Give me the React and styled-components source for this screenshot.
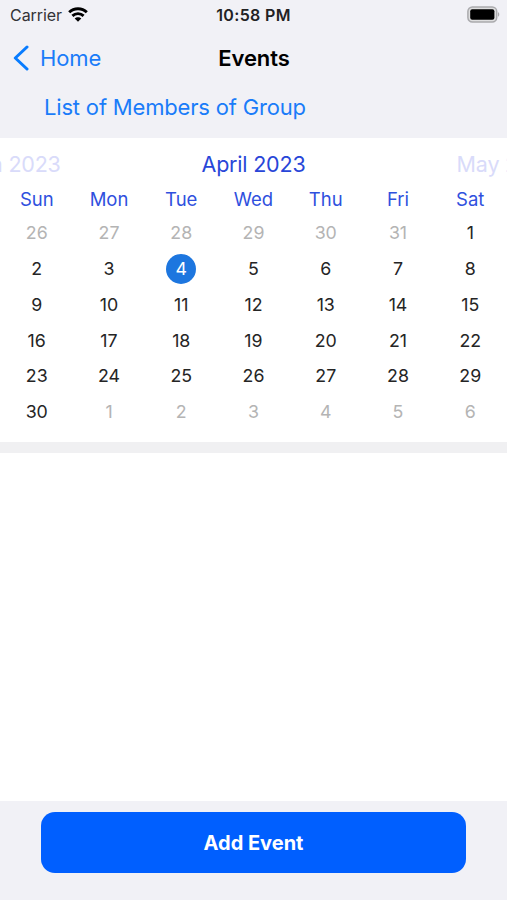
import React from "react";
import styled, { createGlobalStyle } from "styled-components";

const GlobalStyle = createGlobalStyle`
  * { box-sizing: border-box; }
  body { margin: 0; background: #f1f1f6; }
  button { font: inherit; border: 0; padding: 0; background: none; cursor: pointer; }
`;

const Screen = styled.main`
  width: 507px;
  height: 900px;
  display: flex;
  flex-direction: column;
  overflow: hidden;
  background: #f1f1f6;
  color: #000;
  font-family: Inter, "Liberation Sans", sans-serif;
`;

const StatusBar = styled.header`
  height: 29px;
  flex: none;
  display: grid;
  grid-template-columns: 1fr auto 1fr;
  align-items: center;
  padding: 0 7px 0 10px;
`;

const Carrier = styled.div`
  display: flex;
  align-items: center;
  gap: 6px;
  font-size: 16px;
  letter-spacing: -0.05px;
  color: #333336;
`;

const Clock = styled.time`
  font-size: 16px;
  font-weight: 600;
  letter-spacing: 0.35px;
  margin: 0 3px 0 0;
  color: #222224;
`;

const Battery = styled.svg`
  justify-self: end;
`;

const NavBar = styled.nav`
  height: 57px;
  flex: none;
  display: grid;
  grid-template-columns: 1fr auto 1fr;
  align-items: center;
  padding: 0 13px;
`;

const BackButton = styled.button`
  display: flex;
  align-items: center;
  justify-self: start;
  gap: 10px;
  font-size: 22px;
  line-height: 28px;
  letter-spacing: -0.1px;
  color: #1a7cf9;
`;

const Title = styled.h1`
  margin: 0 0 0 1px;
  font-size: 22px;
  line-height: 28px;
  font-weight: 600;
  letter-spacing: -0.1px;
`;

const LinkRow = styled.div`
  height: 52px;
  flex: none;
  padding: 7px 0 0 44px;
`;

const MembersLink = styled.button`
  display: block;
  font-size: 22px;
  line-height: 28px;
  letter-spacing: -0.18px;
  color: #1a7cf9;
`;

const Calendar = styled.section`
  height: 304px;
  flex: none;
  background: #fff;
  padding-top: 11px;
`;

const Months = styled.div`
  height: 30px;
  display: flex;
  justify-content: center;
`;

const Month = styled.div`
  width: 253.5px;
  flex: none;
  text-align: center;
  white-space: nowrap;
  font-size: 21.5px;
  line-height: 30px;
  letter-spacing: -0.2px;
  color: ${(p) => (p.$faded ? "#d9dbfa" : "#2846d8")};
`;

const Week = styled.div`
  display: grid;
  grid-template-columns: repeat(7, 72.25px);
  justify-content: center;
  height: ${(p) => (p.$heading ? "36.4px" : "35.75px")};
  align-items: center;
`;

const DayName = styled.span`
  text-align: center;
  font-size: 18.5px;
  line-height: 24px;
  padding-top: 3.6px;
  color: #2f50de;
`;

const Day = styled.button`
  justify-self: center;
  width: 30px;
  height: 30px;
  border-radius: 50%;
  font-size: 17.8px;
  line-height: 30px;
  text-align: center;
  color: ${(p) => (p.$selected ? "#fff" : p.$outside ? "#b4b4b4" : "#252525")};
  background: ${(p) => (p.$selected ? "#1d76df" : "transparent")};
`;

const Agenda = styled.section`
  flex: none;
  height: 359px;
  border-top: 11px solid #f0f0f2;
  background: #fff;
`;

const Footer = styled.footer`
  flex: 1;
  padding: 11px 41px 0;
`;

const AddButton = styled.button`
  display: block;
  width: 100%;
  height: 61px;
  border-radius: 14px;
  background: #005fff;
  color: #fff;
  font-size: 20px;
  font-weight: 700;
`;

const DAY_NAMES = ["Sun", "Mon", "Tue", "Wed", "Thu", "Fri", "Sat"];

const FIRST_CELL = Date.UTC(2023, 2, 26);
const WEEKS = Array.from({ length: 6 }, (_, w) =>
  Array.from({ length: 7 }, (_, d) => {
    const date = new Date(FIRST_CELL + (w * 7 + d) * 86400000);
    return { day: date.getUTCDate(), outside: date.getUTCMonth() !== 3 };
  })
);

function WifiIcon() {
  return (
    <svg width="20" height="15" viewBox="0 0 20 15" fill="none" stroke="#000" strokeWidth="2.9">
      <path d="M1.2 5.3C6 .6 14 .6 18.8 5.3" />
      <path d="M4.4 8.9c3.2-3 8-3 11.2 0" />
      <path d="M10 14.7 6.7 11.4c1.7-1.6 4.9-1.6 6.6 0Z" fill="#000" stroke="none" />
    </svg>
  );
}

function BatteryIcon() {
  return (
    <Battery width="33" height="17" viewBox="0 0 33 17">
      <rect x="0.9" y="1" width="28.8" height="15" rx="4.5" fill="#dededf" stroke="#aaaaad" strokeWidth="1.5" />
      <rect x="3.2" y="3.3" width="24.2" height="10.4" rx="2" fill="#000" />
      <path d="M31 6.3c1.7.6 1.7 3.8 0 4.4Z" fill="#aaaaad" />
    </Battery>
  );
}

function ChevronIcon() {
  return (
    <svg width="17" height="26" viewBox="0 0 17 26" fill="none" stroke="#087cff" strokeWidth="3" strokeLinecap="round" strokeLinejoin="round">
      <path d="M14 2 2.3 13 14 24" />
    </svg>
  );
}

export default function App() {
  return (
    <>
      <GlobalStyle />
      <Screen>
        <StatusBar>
          <Carrier>
            Carrier
            <WifiIcon />
          </Carrier>
          <Clock>10:58 PM</Clock>
          <BatteryIcon />
        </StatusBar>
        <NavBar>
          <BackButton>
            <ChevronIcon />
            Home
          </BackButton>
          <Title>Events</Title>
        </NavBar>
        <LinkRow>
          <MembersLink>List of Members of Group</MembersLink>
        </LinkRow>
        <Calendar>
          <Months>
            <Month $faded>March 2023</Month>
            <Month>April 2023</Month>
            <Month $faded>May 2023</Month>
          </Months>
          <Week $heading>
            {DAY_NAMES.map((name) => (
              <DayName key={name}>{name}</DayName>
            ))}
          </Week>
          {WEEKS.map((week, w) => (
            <Week key={w}>
              {week.map(({ day, outside }) => (
                <Day key={day} $outside={outside} $selected={!outside && day === 4}>
                  {day}
                </Day>
              ))}
            </Week>
          ))}
        </Calendar>
        <Agenda />
        <Footer>
          <AddButton>Add Event</AddButton>
        </Footer>
      </Screen>
    </>
  );
}
